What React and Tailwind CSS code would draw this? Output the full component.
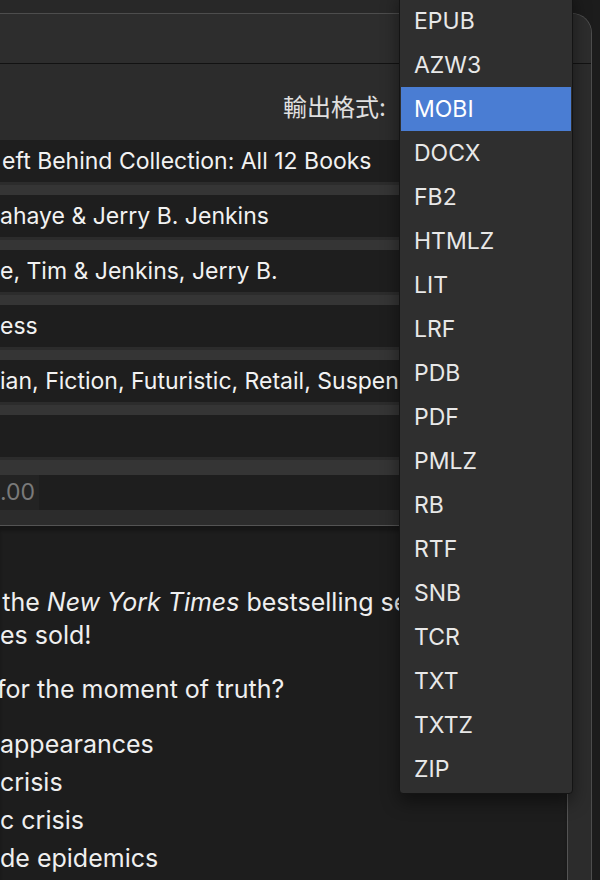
const formats = [
  'EPUB', 'AZW3', 'MOBI', 'DOCX', 'FB2', 'HTMLZ', 'LIT', 'LRF', 'PDB',
  'PDF', 'PMLZ', 'RB', 'RTF', 'SNB', 'TCR', 'TXT', 'TXTZ', 'ZIP',
];

const fields = [
  'eft Behind Collection: All 12 Books',
  'ahaye & Jerry B. Jenkins',
  'e, Tim & Jenkins, Jerry B.',
  'ess',
  'ian, Fiction, Futuristic, Retail, Suspense',
  '',
];

function FormatMenu() {
  const selected = 'MOBI';
  return (
    <div className="absolute left-[399px] top-[-10px] w-[174px] pt-[8px] pb-[2px] bg-[#2f2f2f] border border-[#141414] rounded-b-[4px] shadow-[0_8px_18px_rgba(0,0,0,0.45)]">
      {formats.map((f) => (
        <div
          key={f}
          className={
            f === selected
              ? 'h-[44px] mx-[1px] pl-[13px] flex items-center bg-[#4a7dd3] text-white'
              : 'h-[44px] mx-[1px] pl-[13px] flex items-center text-[#e8e8e8]'
          }
        >
          {f}
        </div>
      ))}
    </div>
  );
}

export default function App() {
  return (
    <div className="relative w-[600px] h-[880px] overflow-hidden bg-[#1c1c1c] font-[Inter,'Noto_Sans_CJK_TC',sans-serif] text-[23px]">
      {/* strip of the window behind */}
      <div className="h-[13px] w-[572px] bg-[#282828]" />

      <div className="w-[592px] h-[867px] rounded-tr-[20px] border-t border-r border-[#4d4d4d] bg-[#2c2c2c] overflow-hidden">
        <div className="h-[50px] bg-[#2d2d2d] border-b border-[#121212]" />

        <div className="h-[76px] flex justify-end items-start pr-[205px]">
          <span className="mt-[30px] leading-[28px] text-[24px] text-[#e0e0e0]">輸出格式:</span>
        </div>

        <div className="mr-[25px] flex flex-col">
          {fields.map((t, i) => (
            <div
              key={i}
              className={
                i === 0
                  ? 'h-[42px] bg-[#1e1e1e] flex items-center whitespace-nowrap overflow-hidden text-[#f2f2f2]'
                  : 'mt-[3px] h-[52px] border-t-[10px] border-[#353535] bg-[#1e1e1e] flex items-center whitespace-nowrap overflow-hidden text-[#f2f2f2]'
              }
            >
              <span className={i === 0 ? 'pl-[2px]' : ''}>{t}</span>
            </div>
          ))}
          <div className="mt-[3px] h-[50px] border-t-[15px] border-[#353535] bg-[#1e1e1e] flex items-center">
            <span className="text-[#7a7a7a] bg-[#232323] pr-[4px]">.00</span>
          </div>
        </div>

        <div className="mt-[15px] mr-[23px] h-[400px] border-t border-r border-[#545454] bg-[#1d1d1d] shadow-[inset_0_5px_3px_rgba(0,0,0,0.25)] pt-[60px] text-[25px] text-[#efefef] whitespace-nowrap overflow-hidden">
          <div className="leading-[33px] ml-[-29px]">
            of the <i>New York Times</i> bestselling series
          </div>
          <div className="leading-[33px]">es sold!</div>
          <div className="mt-[21px] leading-[33px] ml-[-3px]">for the moment of truth?</div>
          <div className="mt-[19px] leading-[38px]">appearances</div>
          <div className="leading-[38px]">crisis</div>
          <div className="leading-[38px]">c crisis</div>
          <div className="leading-[38px]">de epidemics</div>
        </div>
      </div>

      <FormatMenu />
    </div>
  );
}
